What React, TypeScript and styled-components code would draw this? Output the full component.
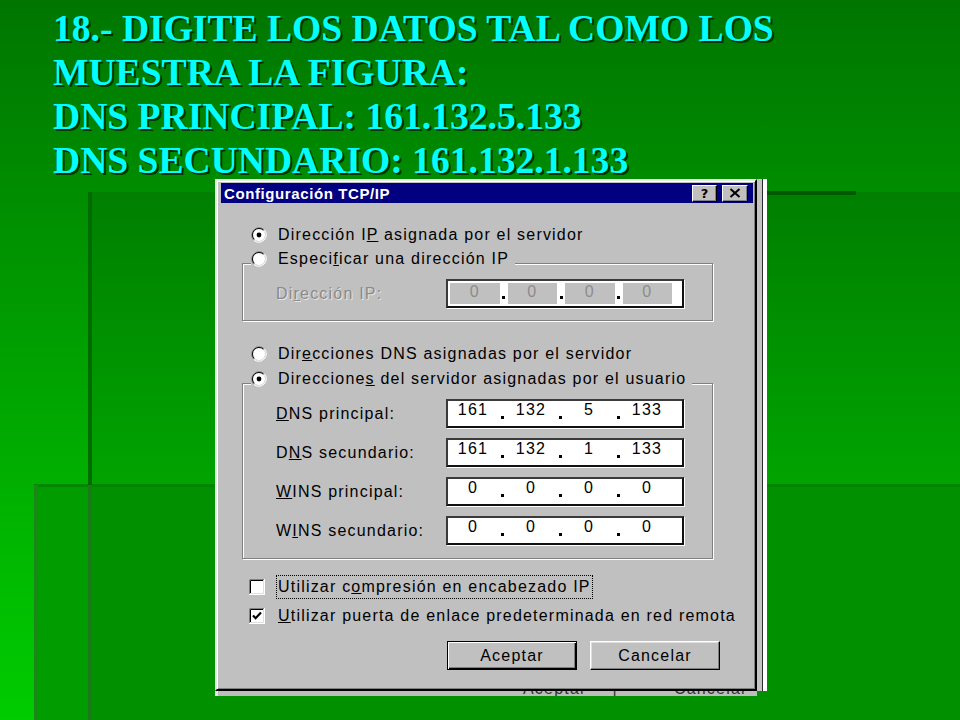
import React, { FC, ReactNode } from 'react';
import styled, { createGlobalStyle } from 'styled-components';

const SANS = `'Liberation Sans', Arial, sans-serif`;
const GREY = '#c0c0c0';

const GlobalStyle = createGlobalStyle`
  html, body {
    margin: 0;
    padding: 0;
    background: #008000;
  }
  #root {
    width: 960px;
    height: 720px;
  }
`;

const Slide = styled.div`
  width: 960px;
  height: 720px;
  box-sizing: border-box;
  overflow: hidden;
  padding-top: 7px;
  display: flex;
  flex-direction: column;
  background:
    linear-gradient(#005800, #005800) 764px 191px / 92px 4px no-repeat,
    linear-gradient(#198819, #198819) 34px 485px / 4px 235px no-repeat,
    linear-gradient(#006c00, #006c00) 88px 192px / 4px 293px no-repeat,
    linear-gradient(#1a7a1a, #1a7a1a) 88px 485px / 4px 235px no-repeat,
    linear-gradient(#008600, #008600) 34px 484px / 926px 3px no-repeat,
    linear-gradient(90deg, #009c00 0 54px, #009000 54px) 34px 485px / 926px 235px no-repeat,
    linear-gradient(#007f00, #00a400) 88px 192px / 872px 293px no-repeat,
    linear-gradient(#007600, #00cc00);
`;

const Title = styled.h1`
  margin: 0 0 0 53px;
  font-family: 'Liberation Serif', 'Times New Roman', serif;
  font-weight: bold;
  font-size: 37.6px;
  line-height: 44px;
  color: #00ffff;
  text-shadow: 2px 2px 0 #003000;
  white-space: nowrap;
`;

const Frame = styled.div`
  margin: -4px 0 0 215px;
  width: 552px;
  display: flex;
  flex-direction: column;
`;

const FrameRow = styled.div`
  display: flex;
`;

const SideStrip = styled.div`
  width: 10px;
  background: linear-gradient(90deg, #c4c4c4 0 5px, #2a2a2a 5px 6px, #ffffff 6px);
`;

const Window = styled.div`
  width: 542px;
  height: 512px;
  box-sizing: border-box;
  background: ${GREY};
  border: 2px solid;
  border-color: #e8e8e8 #000 #000 #e8e8e8;
  box-shadow: inset 1px 1px 0 #fff, inset -1px -1px 0 #808080;
  padding: 2px 2px 0 4px;
  display: flex;
  flex-direction: column;
  font-family: ${SANS};
  font-size: 16px;
  letter-spacing: 1.2px;
  color: #000;
`;

const TitleBar = styled.div`
  height: 20px;
  background: #000080;
  display: flex;
  align-items: center;
  justify-content: space-between;
  padding: 0 5px 0 3px;
`;

const TitleText = styled.span`
  font-family: ${SANS};
  font-weight: bold;
  font-size: 15px;
  letter-spacing: 0.6px;
  color: #fff;
`;

const TitleButtons = styled.div`
  display: flex;
  gap: 5px;
`;

const CaptionButton = styled.div<{ $w: number }>`
  width: ${(p) => p.$w}px;
  height: 17px;
  box-sizing: border-box;
  background: ${GREY};
  border: 1px solid;
  border-color: #fff #000 #000 #fff;
  box-shadow: inset -1px -1px 0 #808080;
  display: flex;
  align-items: center;
  justify-content: center;
  font-family: 'DejaVu Sans', sans-serif;
  font-weight: bold;
  font-size: 13px;
  letter-spacing: 0;
  line-height: 1;
`;

const OptionRow = styled.div<{ $mt: number; $ml?: number; $gap?: number; $h?: number }>`
  display: flex;
  align-items: center;
  gap: ${(p) => p.$gap ?? 11}px;
  height: ${(p) => p.$h ?? 18}px;
  margin-top: ${(p) => p.$mt}px;
  margin-left: ${(p) => p.$ml ?? 30}px;
  white-space: nowrap;
`;

const GroupBox = styled.div<{ $mt: number; $pb: number }>`
  margin: ${(p) => p.$mt}px 0 0 21px;
  width: 471px;
  box-sizing: border-box;
  border: 1px solid #808080;
  box-shadow: inset 1px 1px 0 #fff, 1px 1px 0 #fff;
  padding-bottom: ${(p) => p.$pb}px;
  display: flex;
  flex-direction: column;
`;

const Legend = styled.div`
  align-self: flex-start;
  margin: -14px 0 0 8px;
  padding-right: 6px;
  height: 18px;
  background: ${GREY};
  display: flex;
  align-items: center;
  gap: 11px;
  white-space: nowrap;
`;

const Fields = styled.div`
  margin-top: 11px;
  display: flex;
  flex-direction: column;
  gap: 10px;
`;

const FieldRow = styled.div`
  display: flex;
  align-items: center;
  height: 29px;
  padding-left: 33px;
`;

const FieldLabel = styled.span<{ $disabled?: boolean }>`
  width: 170px;
  white-space: nowrap;
  color: ${(p) => (p.$disabled ? '#8a8a8a' : '#000')};
  text-shadow: ${(p) => (p.$disabled ? '1px 1px 0 #e6e6e6' : 'none')};
`;

const IPBox = styled.div<{ $disabled?: boolean }>`
  width: 238px;
  height: 29px;
  box-sizing: border-box;
  display: flex;
  background: #fff;
  border: 2px solid;
  border-color: #3a3a3a #111 #111 #3a3a3a;
  box-shadow: 1px 1px 0 #fff;
  padding: ${(p) => (p.$disabled ? '2px 10px 2px 2px' : '0 10px 0 0')};
`;

const IPCell = styled.div<{ $disabled?: boolean }>`
  flex: 1;
  display: flex;
  justify-content: center;
  align-items: flex-start;
  line-height: 18px;
  background: ${(p) => (p.$disabled ? GREY : 'transparent')};
  color: ${(p) => (p.$disabled ? '#8c8c8c' : '#000')};
  letter-spacing: 1.2px;
`;

const IPDot = styled.div<{ $disabled?: boolean }>`
  width: 8px;
  display: flex;
  justify-content: center;
  padding-top: ${(p) => (p.$disabled ? 13 : 15)}px;

  &::after {
    content: '';
    width: 3px;
    height: 3px;
    background: #000;
  }
`;

const FocusLabel = styled.span`
  border: 1px dotted #000;
  padding: 2px 1px;
`;

const ButtonRow = styled.div`
  margin-top: 13px;
  padding-right: 33px;
  display: flex;
  justify-content: flex-end;
  gap: 13px;
`;

const Button = styled.div<{ $default?: boolean }>`
  width: 130px;
  height: 29px;
  box-sizing: border-box;
  background: ${GREY};
  display: flex;
  align-items: center;
  justify-content: center;
  border: 1px solid;
  border-color: ${(p) => (p.$default ? '#000' : '#fff #000 #000 #fff')};
  box-shadow: ${(p) =>
    p.$default
      ? 'inset 1px 1px 0 #fff, inset -1px -1px 0 #000, inset -2px -2px 0 #808080'
      : 'inset -1px -1px 0 #808080, inset 1px 1px 0 #dfdfdf'};
`;

const GhostStrip = styled.div`
  width: 542px;
  height: 5px;
  overflow: hidden;
  background: linear-gradient(90deg, #e8e8e8 0 3px, #bdbdbd 3px);
  display: flex;
  padding-left: 308px;
  box-sizing: border-box;
  font-family: ${SANS};
  font-size: 16px;
  letter-spacing: 1.2px;
  color: #333;
`;

const GhostText = styled.span<{ $ml: number }>`
  margin: -11px 0 0 ${(p) => p.$ml}px;
  line-height: 18px;
  white-space: nowrap;
`;

const Radio: FC<{ checked?: boolean }> = ({ checked }) => (
  <svg width="16" height="16" viewBox="0 0 16 16">
    <circle cx="8" cy="8" r="6.2" fill="#fff" />
    <path d="M2.7 13.3 A7.5 7.5 0 0 1 13.3 2.7" fill="none" stroke="#808080" />
    <path d="M13.3 2.7 A7.5 7.5 0 0 1 2.7 13.3" fill="none" stroke="#fff" />
    <path d="M3.4 12.6 A6.5 6.5 0 0 1 12.6 3.4" fill="none" stroke="#000" />
    <path d="M12.6 3.4 A6.5 6.5 0 0 1 3.4 12.6" fill="none" stroke="#dfdfdf" />
    {checked && <circle cx="8" cy="8" r="2.4" fill="#000" />}
  </svg>
);

const CheckBox: FC<{ checked?: boolean }> = ({ checked }) => (
  <svg width="16" height="16" viewBox="0 0 16 16">
    <rect x="0" y="0" width="16" height="16" fill="#fff" />
    <path d="M0.5 15 V0.5 H15" stroke="#808080" fill="none" />
    <path d="M1.5 14 V1.5 H14" stroke="#000" fill="none" />
    <path d="M0 15.5 H15.5 V0" stroke="#fff" fill="none" />
    <path d="M1 14.5 H14.5 V1" stroke="#dfdfdf" fill="none" />
    {checked && (
      <path d="M4 7.5 L6.6 10.2 L12 4.6" stroke="#000" strokeWidth="2.2" fill="none" />
    )}
  </svg>
);

const CloseGlyph: FC = () => (
  <svg width="12" height="10" viewBox="0 0 12 10">
    <path d="M1.5 1 L10.5 9 M10.5 1 L1.5 9" stroke="#000" strokeWidth="2" />
  </svg>
);

const IPField: FC<{ values: string[]; disabled?: boolean }> = ({ values, disabled }) => (
  <IPBox $disabled={disabled}>
    {values.map((v, i) => (
      <React.Fragment key={i}>
        {i > 0 && <IPDot $disabled={disabled} />}
        <IPCell $disabled={disabled}>{v}</IPCell>
      </React.Fragment>
    ))}
  </IPBox>
);

interface Entry {
  label: ReactNode;
  values: string[];
}

const ENTRIES: Entry[] = [
  { label: <><u>D</u>NS principal:</>, values: ['161', '132', '5', '133'] },
  { label: <>D<u>N</u>S secundario:</>, values: ['161', '132', '1', '133'] },
  { label: <><u>W</u>INS principal:</>, values: ['0', '0', '0', '0'] },
  { label: <>W<u>I</u>NS secundario:</>, values: ['0', '0', '0', '0'] }
];

const App: FC = () => (
  <>
    <GlobalStyle />
    <Slide>
      <Title>
        18.- DIGITE LOS DATOS TAL COMO LOS
        <br />
        MUESTRA LA FIGURA:
        <br />
        DNS PRINCIPAL: 161.132.5.133
        <br />
        DNS SECUNDARIO: 161.132.1.133
      </Title>

      <Frame>
        <FrameRow>
          <Window>
            <TitleBar>
              <TitleText>Configuración TCP/IP</TitleText>
              <TitleButtons>
                <CaptionButton $w={25}>?</CaptionButton>
                <CaptionButton $w={26}>
                  <CloseGlyph />
                </CaptionButton>
              </TitleButtons>
            </TitleBar>

            <OptionRow $mt={23}>
              <Radio checked />
              <span>
                Dirección I<u>P</u> asignada por el servidor
              </span>
            </OptionRow>

            <GroupBox $mt={19} $pb={12}>
              <Legend>
                <Radio />
                <span>
                  Especi<u>f</u>icar una dirección IP
                </span>
              </Legend>
              <Fields>
                <FieldRow>
                  <FieldLabel $disabled>
                    Di<u>r</u>ección IP:
                  </FieldLabel>
                  <IPField disabled values={['0', '0', '0', '0']} />
                </FieldRow>
              </Fields>
            </GroupBox>

            <OptionRow $mt={24}>
              <Radio />
              <span>
                Dir<u>e</u>cciones DNS asignadas por el servidor
              </span>
            </OptionRow>

            <GroupBox $mt={20} $pb={13}>
              <Legend>
                <Radio checked />
                <span>
                  Direccione<u>s</u> del servidor asignadas por el usuario
                </span>
              </Legend>
              <Fields>
                {ENTRIES.map((e, i) => (
                  <FieldRow key={i}>
                    <FieldLabel>{e.label}</FieldLabel>
                    <IPField values={e.values} />
                  </FieldRow>
                ))}
              </Fields>
            </GroupBox>

            <OptionRow $mt={16} $ml={28} $gap={11} $h={24}>
              <CheckBox />
              <FocusLabel>
                Utilizar c<u>o</u>mpresión en encabezado IP
              </FocusLabel>
            </OptionRow>

            <OptionRow $mt={5} $ml={28} $gap={13} $h={24}>
              <CheckBox checked />
              <span>
                <u>U</u>tilizar puerta de enlace predeterminada en red remota
              </span>
            </OptionRow>

            <ButtonRow>
              <Button $default>Aceptar</Button>
              <Button>Cancelar</Button>
            </ButtonRow>
          </Window>
          <SideStrip />
        </FrameRow>
        <GhostStrip>
          <GhostText $ml={0}>Aceptar</GhostText>
          <GhostText $ml={26}>|</GhostText>
          <GhostText $ml={56}>Cancelar</GhostText>
        </GhostStrip>
      </Frame>
    </Slide>
  </>
);

export default App;
